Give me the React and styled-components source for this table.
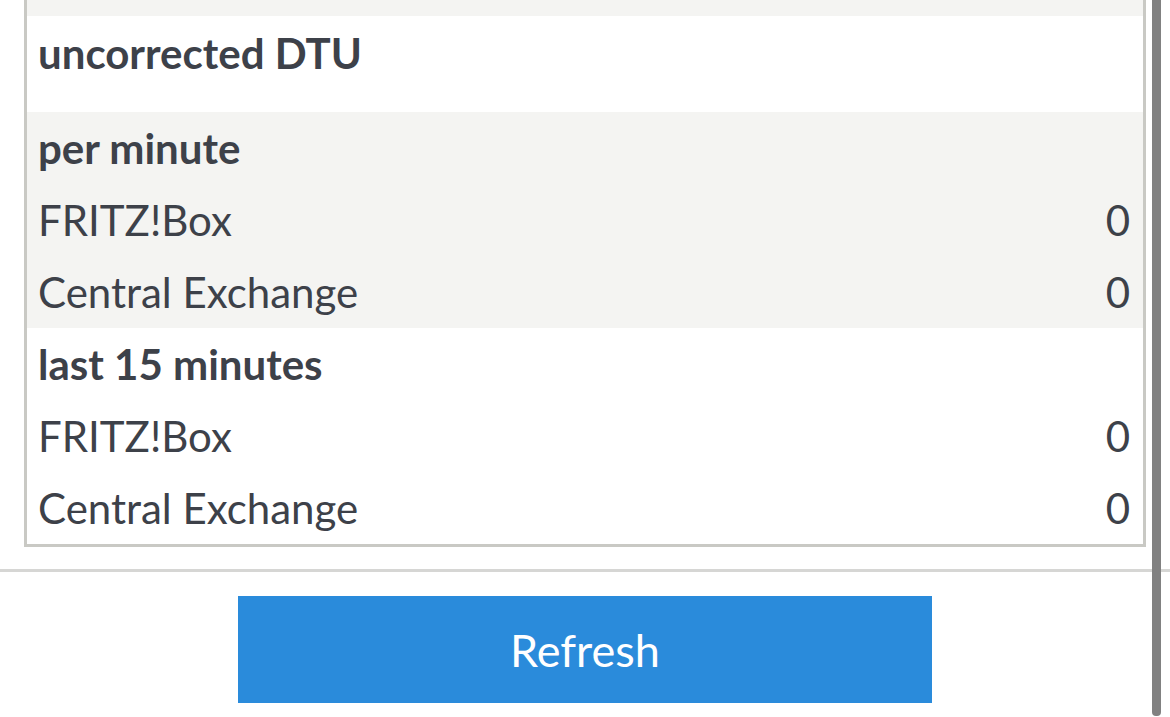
import React from "react";
import styled, { createGlobalStyle } from "styled-components";

const Global = createGlobalStyle`
  html, body { margin: 0; padding: 0; background: #fff; overflow: hidden; }
  body { font-family: Lato, "Open Sans", sans-serif; color: #3d4149; }
`;

const Page = styled.div`
  position: relative;
  width: 1170px;
  height: 717px;
  overflow: hidden;
`;

const Panel = styled.div`
  margin: 0 24px 0 24px;
  width: 1116px;
  border: 3px solid #c9c9c4;
  border-top: none;
`;

const Section = styled.div`
  background: ${(p) => (p.$shaded ? "#f4f4f2" : "#fff")};
`;

const Spacer = styled.div`
  height: 16px;
  background: #f4f4f2;
`;

const Title = styled.div`
  height: 96px;
  display: flex;
  align-items: flex-start;
  padding: 14px 11px 0;
  box-sizing: border-box;
  font-size: 42px;
  font-weight: 700;
  line-height: 46px;
`;

const Row = styled.div`
  height: 72px;
  display: flex;
  align-items: center;
  justify-content: space-between;
  padding: 0 13px 0 11px;
  font-size: 42px;
  font-weight: ${(p) => (p.$head ? 700 : 400)};
`;

const Rule = styled.div`
  margin-top: 22px;
  height: 3px;
  background: #d6d6d4;
`;

const ButtonWrap = styled.div`
  display: flex;
  justify-content: center;
  padding-top: 24px;
`;

const Button = styled.button`
  width: 694px;
  height: 107px;
  border: none;
  background: #2a8bdb;
  color: #fff;
  font-family: Lato, "Open Sans", sans-serif;
  font-size: 45px;
  font-weight: 400;
  cursor: pointer;
`;

const ScrollThumb = styled.div`
  position: absolute;
  left: 1152px;
  top: 0;
  width: 9px;
  height: 716px;
  background: #818181;
  border-radius: 0 0 4px 4px;
`;

const groups = [
  { title: "per minute", shaded: true },
  { title: "last 15 minutes", shaded: false },
];

export default function App() {
  return (
    <Page>
      <Global />
      <Panel>
        <Spacer />
        <Title>uncorrected DTU</Title>
        {groups.map((g) => (
          <Section key={g.title} $shaded={g.shaded}>
            <Row $head>{g.title}</Row>
            <Row>
              <span>FRITZ!Box</span>
              <span>0</span>
            </Row>
            <Row>
              <span>Central Exchange</span>
              <span>0</span>
            </Row>
          </Section>
        ))}
      </Panel>
      <Rule />
      <ButtonWrap>
        <Button>Refresh</Button>
      </ButtonWrap>
      <ScrollThumb />
    </Page>
  );
}
